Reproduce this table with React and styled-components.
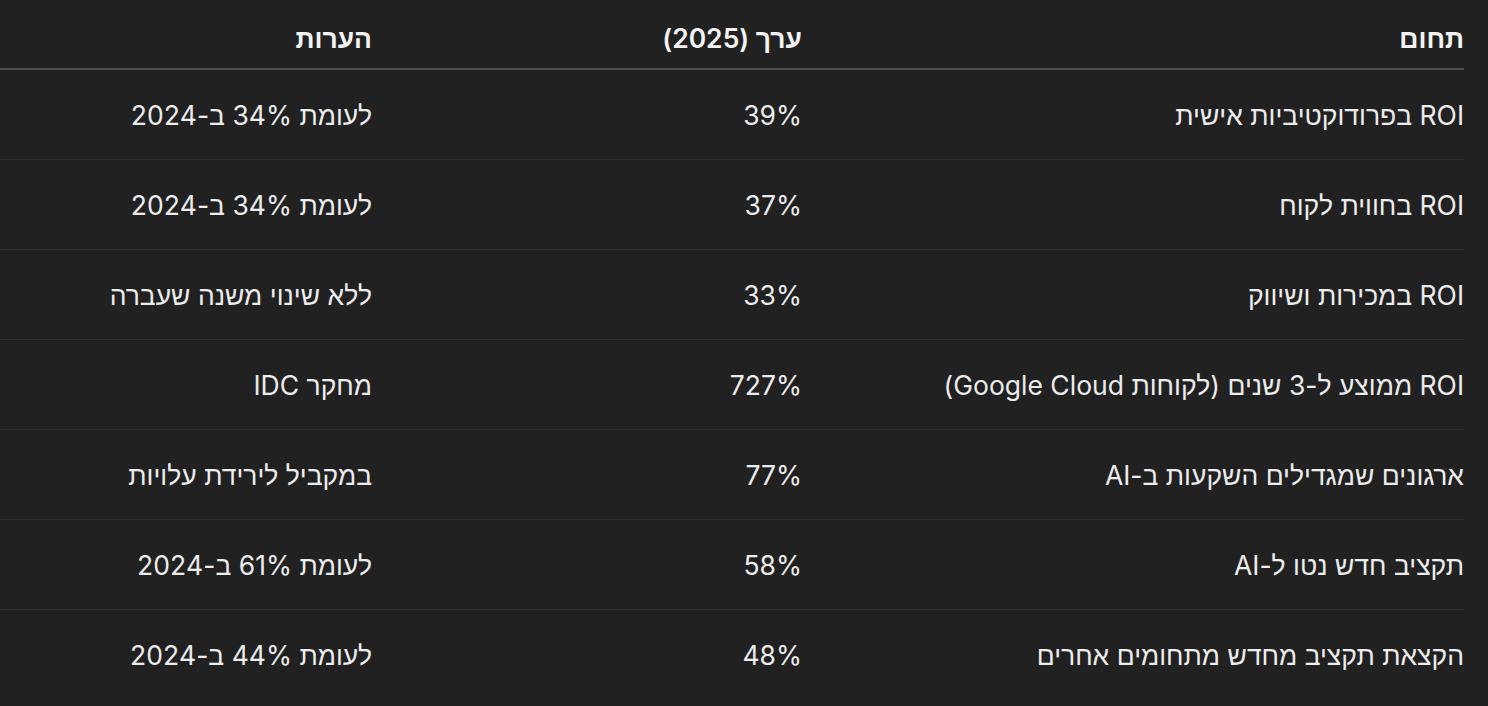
import React from "react";
import styled, { createGlobalStyle } from "styled-components";

const Global = createGlobalStyle`
  html, body { margin: 0; padding: 0; background: #212121; }
  body { font-family: "Inter", "Liberation Sans", Arial, sans-serif; color: #ececec; }
`;

const Wrap = styled.div`
  width: 1464px;
  direction: rtl;
  background: #212121;
`;

const Table = styled.table`
  width: 100%;
  border-collapse: collapse;
  table-layout: fixed;
  font-size: 26.5px;
  line-height: 42px;
`;

const Th = styled.th`
  text-align: right;
  font-weight: 600;
  color: #f3f3f3;
  padding: 17px 16px 9px 16px;
  border-bottom: 2px solid #4e4e4e;
  &:first-child { padding-right: 0; }
  &:last-child { padding-left: 0; }
`;

const Tr = styled.tr`
  &:not(:last-child) td { border-bottom: 1px solid #2e2e2e; }
`;

const Td = styled.td`
  text-align: right;
  font-weight: 400;
  color: #ececec;
  padding: 24px 16px 23px 16px;
  white-space: nowrap;
  &:first-child { padding-right: 0; }
  &:last-child { padding-left: 0; }
`;

const rows = [
  ["ROI בפרודוקטיביות אישית", "39%", "לעומת 34% ב-2024"],
  ["ROI בחווית לקוח", "37%", "לעומת 34% ב-2024"],
  ["ROI במכירות ושיווק", "33%", "ללא שינוי משנה שעברה"],
  ["ROI ממוצע ל-3 שנים (לקוחות Google Cloud)", "727%", "מחקר IDC"],
  ["ארגונים שמגדילים השקעות ב-AI", "77%", "במקביל לירידת עלויות"],
  ["תקציב חדש נטו ל-AI", "58%", "לעומת 61% ב-2024"],
  ["הקצאת תקציב מחדש מתחומים אחרים", "48%", "לעומת 44% ב-2024"],
];

export default function App() {
  return (
    <>
      <Global />
      <Wrap>
        <Table>
          <colgroup>
            <col style={{ width: 646 }} />
            <col style={{ width: 430 }} />
            <col />
          </colgroup>
          <thead>
            <tr>
              <Th>תחום</Th>
              <Th>ערך (2025)</Th>
              <Th>הערות</Th>
            </tr>
          </thead>
          <tbody>
            {rows.map((r, i) => (
              <Tr key={i}>
                <Td>{r[0]}</Td>
                <Td>{r[1]}</Td>
                <Td>{r[2]}</Td>
              </Tr>
            ))}
          </tbody>
        </Table>
      </Wrap>
    </>
  );
}
